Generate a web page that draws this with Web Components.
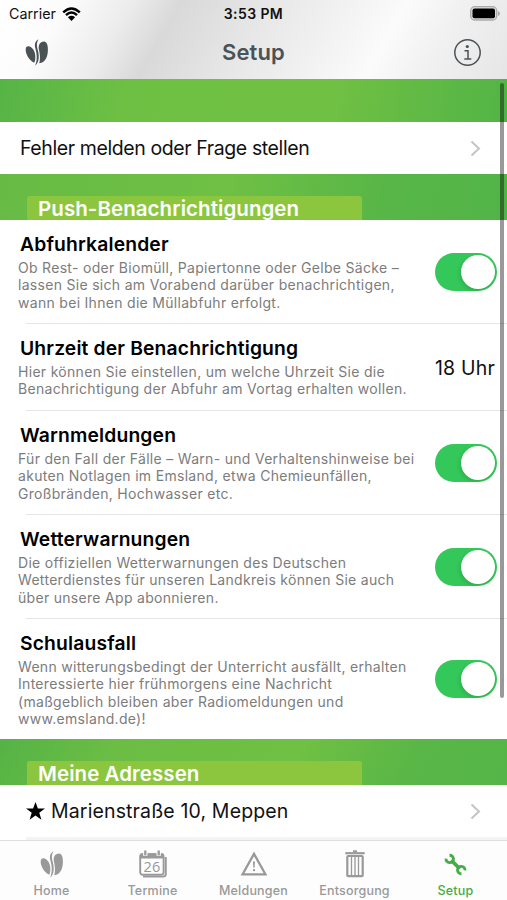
<!DOCTYPE html>
<html lang="de">
<head>
<meta charset="utf-8">
<title>Setup</title>
<style>
html,body{margin:0;height:100%;background:#fff}
</style>
</head>
<body>
<setup-screen></setup-screen>
<script>
const define = (name, html) => customElements.define(name, class extends HTMLElement {
  connectedCallback() {
    if (this.shadowRoot) return;
    const r = this.attachShadow({mode: 'open'});
    r.innerHTML = typeof html === 'function' ? html(this) : html;
  }
});

const ICONS = {
  leaf: `<svg width="24" height="27" viewBox="0 0 24 27" fill="currentColor"><path d="M1.300 8.100C-.8 11.500 2.600 20.800 9.300 23.700C10.900 20.200 10.700 14.500 8.500 10.800C6.700 7.700 3 6 1.300 8.100Z"/>
<path d="M13.600.3C10.300 2 9.300 5 10.300 9C11.500 14 13 19.500 10.200 26.700C14.200 23.500 14.400 17 12.900 11.500C11.700 7 11.300 4 13.600.3Z"/>
<path d="M19.200 2.500C14.600 2.500 13 6.500 14 11C15 15.500 15.500 19.500 14.300 24.200C20.800 23.500 22.900 17 22.900 10.500C22.900 6 21.700 2.600 19.200 2.500Z"/></svg>`,
  calendar: `<svg width="28" height="28" viewBox="0 0 28 28"><path d="M4 26.600H24Q26.800 26.600 26.800 24V7" fill="none" stroke="currentColor" stroke-width="1.900"/><rect x="1.200" y="4.200" width="23.400" height="20.600" rx="2.500" fill="#fdfdfd" stroke="currentColor" stroke-width="1.900"/><path d="M.8 8.600V5.500Q.8 3.200 3.500 3.200H22.300Q25 3.200 25 5.500V8.600Z" fill="currentColor"/><path d="M6.300 1v4.800M19.700 1v4.800" stroke="#fdfdfd" stroke-width="4.400"/><path d="M6.300.6v4.700M19.700.6v4.700" stroke="currentColor" stroke-width="2.300"/><text x="13" y="21.500" text-anchor="middle" font-family="Open Sans,sans-serif" font-size="14.500" font-weight="500" fill="currentColor">26</text></svg>`,
  warning: `<svg width="28" height="26" viewBox="0 0 28 26"><path d="M14 2.900L25.400 23.300H2.600Z" fill="none" stroke="currentColor" stroke-width="2.300"/><path d="M13 10.500h2l-.4 6.300h-1.200z" fill="currentColor"/><circle cx="14" cy="19.100" r="1.200" fill="currentColor"/></svg>`,
  bin: `<svg width="20" height="28" viewBox="0 0 20 28" fill="none" stroke="currentColor"><path d="M.3 3.200H19.700" stroke-width="2.200"/><path d="M8 1.300h4" stroke-width="2"/><rect x="2.300" y="6" width="15.400" height="20.200" rx="1" stroke-width="2.200"/><path d="M6.500 7v18M10 7v18M13.500 7v18" stroke-width="1.300"/></svg>`,
  wrench: `<svg width="23" height="23" viewBox="0 0 24 24"><path d="M7.500 7.500L16.500 16.500" stroke="currentColor" stroke-width="3.800"/><path d="M5.800 2.300A3.900 3.900 0 1 1 2.100 5.800M18.200 21.700A3.900 3.900 0 1 1 21.900 18.200" fill="none" stroke="currentColor" stroke-width="3"/></svg>`
};

define('app-icon', el => `<style>:host{display:block;line-height:0}svg{display:block}</style>${ICONS[el.getAttribute('name')]}`);

define('status-bar', `<style>
:host{display:grid;grid-template-columns:1fr auto 1fr;align-items:center;height:27px;padding:0 7px 0 9px;box-sizing:border-box;color:#111}
.l{display:flex;align-items:center;gap:6px;font-size:14.300px}
.t{font-size:14px;font-weight:600;letter-spacing:.4px;padding-right:2px}
.b{justify-self:end}svg{display:block}
</style>
<div class="l"><span>Carrier</span><svg width="19" height="14" viewBox="0 0 19 14"><path d="M1.200 5.300Q9.500-2.500 17.800 5.300M4 8.100Q9.500 3 15 8.100" fill="none" stroke="#000" stroke-width="2.400"/><path d="M5.900 10.200Q9.500 7.300 13.100 10.200L9.500 13.900Z"/></svg></div>
<div class="t">3:53 PM</div>
<svg class="b" width="30" height="15" viewBox="0 0 30 15"><rect x=".7" y=".7" width="26" height="13.300" rx="4" fill="#ddd" stroke="#aaa" stroke-width="1.300"/><rect x="2.500" y="2.500" width="22.500" height="9.700" rx="2"/><path d="M28 5v5q2-1 2-2.500T28 5" fill="#aaa"/></svg>`);

define('nav-bar', `<style>
:host{display:grid;grid-template-columns:1fr auto 1fr;align-items:center;height:50px;padding:0 25px;box-sizing:border-box;color:#4b5255}
h1{margin:0;font-size:22px;font-weight:600;line-height:28px;letter-spacing:.1px}
svg{display:block;justify-self:end}
</style><app-icon name="leaf"></app-icon><h1>Setup</h1>
<svg width="29" height="29" viewBox="0 0 29 29"><circle cx="14.500" cy="14.500" r="12.700" fill="none" stroke="currentColor" stroke-width="1.500"/><circle cx="14.300" cy="8.500" r="1.600" fill="currentColor"/><path d="M11.500 12.700h3.500v7.800M11.300 20.900h7" fill="none" stroke="currentColor" stroke-width="1.500"/></svg>`);

define('section-head', `<style>
:host{display:flex;align-items:flex-end;height:46px;padding-left:27px;box-sizing:border-box;background:linear-gradient(100deg,#67bb44,#6fc044 45%,#58b647 75%,#52b448)}
:host([alt]){background:linear-gradient(120deg,#54b346,#6bbd44 22%,#6fc043 58%,#59b647 80%,#55b548)}
:host([plain]){height:43px;background:linear-gradient(100deg,#56b446,#6ec044 25%,#70c043 65%,#52b446)}
div{width:335px;height:24px;border-radius:3px 3px 0 0;background:#8cc63f;color:#fff;font-weight:600;font-size:20.500px;line-height:25px;padding-left:11px;letter-spacing:.06px;box-sizing:border-box;white-space:nowrap}
:host([plain]) div{display:none}
</style><div><slot></slot></div>`);

define('toggle-switch', `<style>
:host{display:flex;justify-content:flex-end;width:62px;height:38px;border-radius:19px;background:#34c759;padding:2px;box-sizing:border-box}
i{width:34px;height:34px;border-radius:50%;background:#fff;box-shadow:-1px 2px 4px #0002}
</style><i></i>`);

define('link-row', `<style>
:host{display:flex;align-items:center;justify-content:space-between;height:52px;padding:0 26px 0 20px;box-sizing:border-box;font-size:19.500px;color:#111}
span{display:flex;align-items:center;white-space:nowrap}
</style><span><slot></slot></span><svg width="11" height="17" viewBox="0 0 11 17"><path d="M1.500 1.500L9 8.500L1.500 15.500" fill="none" stroke="#c4c4c6" stroke-width="2"/></svg>`);

define('setting-row', `<style>
:host{display:flex;align-items:center;justify-content:space-between;height:104px;padding:0 10px 0 18px;box-sizing:border-box;position:relative}
:host(:not([last]))::after{content:"";position:absolute;left:26px;right:0;bottom:0;height:1px;background:#e6e6e8}
.c{align-self:flex-start;padding-top:12px;white-space:nowrap}
h2{margin:0 0 2px 2px;font-size:19.300px;line-height:25px;font-weight:600;color:#000;letter-spacing:.16px}
p{margin:0;font-size:14px;line-height:17.400px;color:#7c7c7c;letter-spacing:.3px}
</style><div class="c"><h2><slot name="title"></slot></h2><p><slot></slot></p></div><slot name="control"></slot>`);

define('tab-item', el => `<style>
:host{display:flex;flex-direction:column;align-items:center;color:#999;width:101px;font-size:12.500px;font-weight:500;letter-spacing:.2px}
:host([active]){color:#43ad46}
div{height:30px;display:flex;align-items:center;margin:8px 0 4px}
span{line-height:16px}
</style><div><app-icon name="${el.getAttribute('icon')}"></app-icon></div><span><slot></slot></span>`);

define('setup-screen', `<style>
:host{display:flex;flex-direction:column;position:relative;width:507px;height:900px;overflow:hidden;background:#fff;font-family:Inter,sans-serif}
header{height:79px;background:linear-gradient(120deg,#fff 0,#fcfcfc 12%,#ececec 24%,#d9d9da 33%,#dfdfe0 40%,#e8e8e9 50%,#f0f0f1 61%,#fbfbfb 74%,#f1f1f2 84%,#e6e6e7 100%)}
main{flex:1;display:flex;flex-direction:column;overflow:hidden}
main>*{flex-shrink:0}
nav{display:flex;justify-content:center;height:60px;border-top:1px solid #ddd;background:#fdfdfd;box-sizing:border-box}
.bar{position:absolute;right:3px;top:83px;width:4px;height:615px;border-radius:2px;background:#0006}
.time{font-size:19.500px;padding-right:2px;color:#111;letter-spacing:.2px}
.tight{letter-spacing:-.4px}
.wide{letter-spacing:.14px}
.star{width:19px;height:18px;margin:0 6px 0 6px}
.edge{height:4px;margin-left:26px;background:#f4f4f4}
</style>
<header><status-bar></status-bar><nav-bar></nav-bar></header>
<main>
<section-head plain></section-head>
<link-row class="tight">Fehler melden oder Frage stellen</link-row>
<section-head>Push-Benachrichtigungen</section-head>
<setting-row><span slot="title">Abfuhrkalender</span>Ob Rest- oder Biomüll, Papiertonne oder Gelbe Säcke –<br>lassen Sie sich am Vorabend darüber benachrichtigen,<br>wann bei Ihnen die Müllabfuhr erfolgt.<toggle-switch slot="control"></toggle-switch></setting-row>
<setting-row style="height:87px"><span slot="title">Uhrzeit der Benachrichtigung</span>Hier können Sie einstellen, um welche Uhrzeit Sie die<br>Benachrichtigung der Abfuhr am Vortag erhalten wollen.<span slot="control" class="time">18 Uhr</span></setting-row>
<setting-row><span slot="title">Warnmeldungen</span>Für den Fall der Fälle – Warn- und Verhaltenshinweise bei<br>akuten Notlagen im Emsland, etwa Chemieunfällen,<br>Großbränden, Hochwasser etc.<toggle-switch slot="control"></toggle-switch></setting-row>
<setting-row><span slot="title">Wetterwarnungen</span>Die offiziellen Wetterwarnungen des Deutschen<br>Wetterdienstes für unseren Landkreis können Sie auch<br>über unsere App abonnieren.<toggle-switch slot="control"></toggle-switch></setting-row>
<setting-row last style="height:120px"><span slot="title">Schulausfall</span>Wenn witterungsbedingt der Unterricht ausfällt, erhalten<br>Interessierte hier frühmorgens eine Nachricht<br>(maßgeblich bleiben aber Radiomeldungen und<br>www.emsland.de)!<toggle-switch slot="control"></toggle-switch></setting-row>
<section-head alt>Meine Adressen</section-head>
<link-row class="wide"><svg class="star" viewBox="0 0 19 18"><path d="M9.500 0L11.900 6.600H19L13.300 10.800L15.400 17.700L9.500 13.600L3.600 17.700L5.700 10.800L0 6.600H7.100Z"/></svg>Marienstraße 10, Meppen</link-row>
<div class="edge"></div>
</main>
<nav><tab-item icon="leaf">Home</tab-item><tab-item icon="calendar">Termine</tab-item><tab-item icon="warning">Meldungen</tab-item><tab-item icon="bin">Entsorgung</tab-item><tab-item icon="wrench" active>Setup</tab-item></nav>
<div class="bar"></div>`);
</script>
</body>
</html>
